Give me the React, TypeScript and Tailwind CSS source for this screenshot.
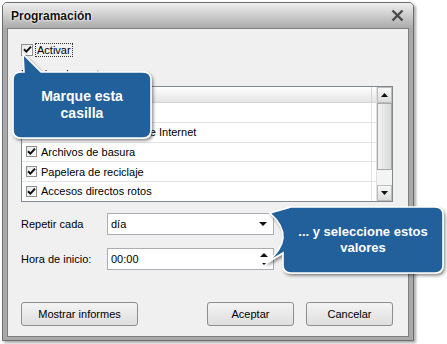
import React from "react";

function Check({ size = 11 }: { size?: number }) {
  return (
    <span
      className="flex shrink-0 items-center justify-center border border-[#8e8f8f] bg-gradient-to-br from-[#e6e6e6] to-white"
      style={{ width: size, height: size }}
    >
      <svg width="9" height="9" viewBox="0 0 9 9">
        <path d="M1 4.2 L3.4 6.6 L8 1.6" fill="none" stroke="#111" strokeWidth="2" />
      </svg>
    </span>
  );
}

const rows = [
  "Archivos temporales",
  "Archivos temporales de Internet",
  "Archivos de basura",
  "Papelera de reciclaje",
  "Accesos directos rotos",
];

export default function App() {
  return (
    <div className="relative h-[344px] w-[447px] overflow-hidden bg-white font-['Liberation_Sans',Arial,sans-serif] text-[11px] text-black">
      <div className="ml-[2px] mt-[2px] flex h-[339px] w-[412px] flex-col rounded-t-[5px] border border-[#6d6d6d] bg-[#a9a9a9] shadow-[2px_2px_3px_rgba(0,0,0,0.35)]">
        <div className="flex h-[25px] items-center justify-between rounded-t-[4px] bg-gradient-to-b from-[#efefef] to-[#ababab] pl-[8px] pr-[9px]">
          <span className="text-[12px] font-bold text-[#111] [text-shadow:0_0_3px_#fff,0_0_2px_#fff]">
            Programación
          </span>
          <svg width="13" height="13" viewBox="0 0 13 13">
            <path d="M1.5 1.5 L11.5 11.5 M11.5 1.5 L1.5 11.5" stroke="#4a4a4a" strokeWidth="2.4" />
          </svg>
        </div>

        <div className="mx-[4px] mb-[3px] flex flex-1 flex-col border border-[#7e7e7e] bg-[#f0f0f0] pl-[13px] pt-[13px]">
          <div className="flex h-[15px] items-center gap-[2px]">
            <Check size={12} />
            <span className="border border-dotted border-[#333] px-[1px] leading-[12px]">Activar</span>
          </div>

          <div className="mt-[10px] h-[14px] leading-[14px]">Limpiar elementos:</div>

          <div className="mt-[5px] flex h-[116px] w-[372px] border border-[#828790] bg-white">
            <div className="flex flex-1 flex-col">
              <div className="flex h-[16px] border-b border-[#d5d5d5] bg-gradient-to-b from-white to-[#e4e4e4]">
                <div className="flex-1 border-r border-[#d5d5d5]" />
                <div className="w-[4px]" />
              </div>
              {rows.map((r, i) => (
                <div
                  key={r}
                  className={`flex ${i === 4 ? "h-[19px]" : "h-[20px] border-b border-[#e3e3e3]"}`}
                >
                  <div className="flex flex-1 items-center gap-[4px] border-r border-[#e3e3e3] pl-[4px]">
                    <Check />
                    <span>{r}</span>
                  </div>
                  <div className="w-[4px]" />
                </div>
              ))}
            </div>
            <div className="flex w-[16px] flex-col border-l border-[#e0e0e0] bg-[#f4f4f4]">
              <div className="flex h-[16px] items-center justify-center border border-[#bcbcbc] bg-gradient-to-b from-[#f8f8f8] to-[#dcdcdc]">
                <svg width="7" height="4" viewBox="0 0 7 4">
                  <path d="M0 4 L3.5 0 L7 4 Z" fill="#111" />
                </svg>
              </div>
              <div className="h-[67px] border border-[#a8a8a8] bg-gradient-to-r from-[#f2f2f2] to-[#dadada]" />
              <div className="flex-1" />
              <div className="flex h-[16px] items-center justify-center border border-[#bcbcbc] bg-gradient-to-b from-[#f8f8f8] to-[#dcdcdc]">
                <svg width="7" height="4" viewBox="0 0 7 4">
                  <path d="M0 0 L3.5 4 L7 0 Z" fill="#111" />
                </svg>
              </div>
            </div>
          </div>

          <div className="mt-[11px] flex h-[22px] items-center">
            <span className="w-[86px]">Repetir cada</span>
            <div className="flex h-[22px] w-[167px] items-center justify-between border border-[#abadb3] bg-white pl-[3px] pr-[6px]">
              <span>día</span>
              <svg width="8" height="4" viewBox="0 0 8 4">
                <path d="M0 0 L4 4 L8 0 Z" fill="#111" />
              </svg>
            </div>
          </div>

          <div className="mt-[13px] flex h-[22px] items-center">
            <span className="w-[86px]">Hora de inicio:</span>
            <div className="flex h-[22px] w-[167px] items-center justify-between border border-[#abadb3] bg-white pl-[3px] pr-[5px]">
              <span>00:00</span>
              <div className="flex flex-col items-center gap-[6px]">
                <svg width="8" height="4" viewBox="0 0 8 4">
                  <path d="M0 4 L4 0 L8 4 Z" fill="#111" />
                </svg>
                <svg width="4" height="2" viewBox="0 0 4 2">
                  <path d="M0 0 L2 2 L4 0 Z" fill="#111" />
                </svg>
              </div>
            </div>
          </div>

          <div className="mt-[32px] flex h-[24px] w-[372px] items-stretch">
            <button className="w-[117px] rounded-[3px] border border-[#8d8d8d] bg-gradient-to-b from-[#f4f4f4] to-[#dedede]">
              Mostrar informes
            </button>
            <div className="flex-1" />
            <button className="w-[87px] rounded-[3px] border border-[#8d8d8d] bg-gradient-to-b from-[#f4f4f4] to-[#dedede]">
              Aceptar
            </button>
            <button className="ml-[12px] w-[87px] rounded-[3px] border border-[#8d8d8d] bg-gradient-to-b from-[#f4f4f4] to-[#dedede]">
              Cancelar
            </button>
          </div>
        </div>
      </div>

      <svg className="pointer-events-none absolute left-0 top-0" width="447" height="344" viewBox="0 0 447 344">
        <defs>
          <filter id="sh" x="-20%" y="-20%" width="140%" height="140%">
            <feDropShadow dx="1.5" dy="2" stdDeviation="1.5" floodColor="#000" floodOpacity="0.45" />
          </filter>
        </defs>
        <path
          d="M24 72 L23 54 L41 72 L143 72 Q151 72 151 80 L151 130 Q151 138 143 138 L21 138 Q13 138 13 130 L13 80 Q13 72 21 72 Z"
          fill="#23609b"
          stroke="#fff"
          strokeWidth="1.6"
          filter="url(#sh)"
        />
        <path
          d="M270 213 L291 207 L435 207 Q443 207 443 215 L443 265 Q443 273 435 273 L291 273 Q283 273 283 265 L283 253 L266 263 Q298 238 270 213 Z"
          fill="#23609b"
          stroke="#fff"
          strokeWidth="1.6"
          filter="url(#sh)"
        />
      </svg>

      <div className="absolute left-[13px] top-[72px] flex h-[66px] w-[138px] flex-col items-center justify-center text-[14px] font-bold leading-[17px] text-white">
        <span>Marque esta</span>
        <span>casilla</span>
      </div>
      <div className="absolute left-[283px] top-[207px] flex h-[66px] w-[160px] flex-col items-center justify-center text-[13px] font-bold leading-[16px] text-white">
        <span>... y seleccione estos</span>
        <span>valores</span>
      </div>
    </div>
  );
}
